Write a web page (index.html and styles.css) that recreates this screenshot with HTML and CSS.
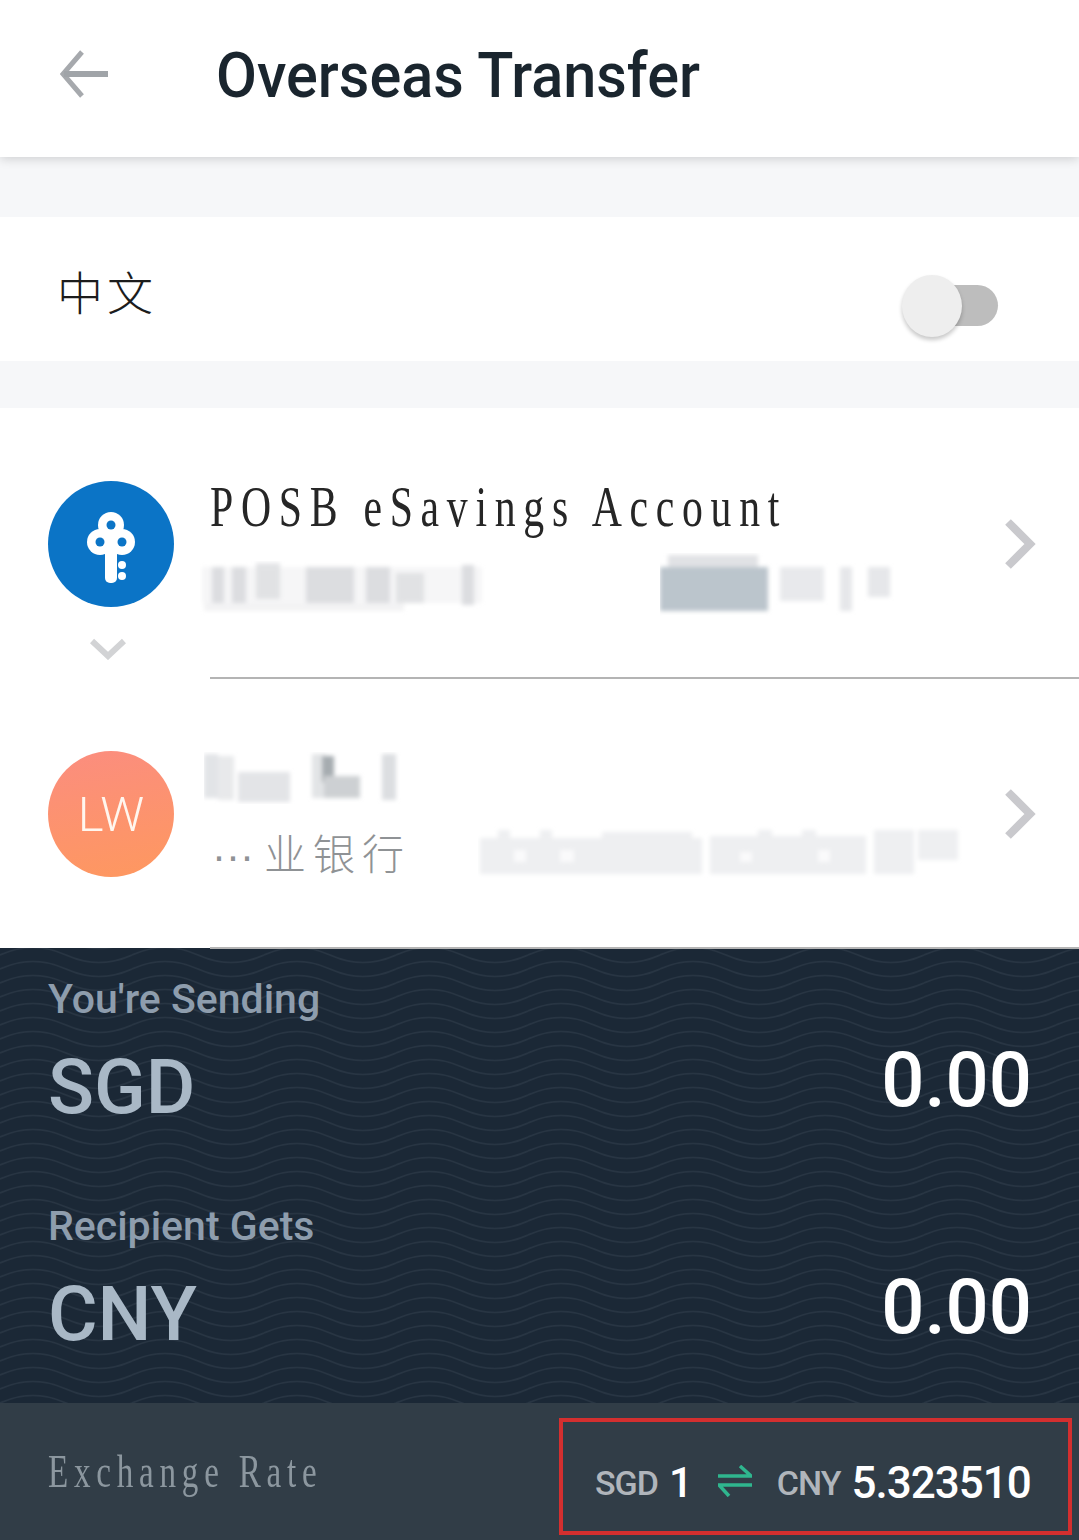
FILE: index.html
```html
<!DOCTYPE html>
<html lang="en">
<head>
  <meta charset="UTF-8" />
  <meta name="viewport" content="width=device-width, initial-scale=1.0"/>
  <title>Overseas Transfer</title>
  <link rel="stylesheet" href="styles.css">
</head>
<body>

<header class="topbar">
  <svg class="back" width="48" height="48" viewBox="0 0 48 48">
    <path d="M22 2 3 24l19 22" fill="none" stroke="#a6a9ad" stroke-width="5"/>
    <path d="M4 24h44" stroke="#a0a4a8" stroke-width="6"/>
  </svg>
  <h1 class="title">Overseas Transfer</h1>
</header>

<section class="lang-row">
  <span class="lang-label">中文</span>
  <div class="toggle"><div class="knob"></div></div>
</section>

<section class="list">
  <div class="row">
    <div class="avatar-col">
      <div class="avatar avatar-posb">
        <svg width="126" height="126" viewBox="0 0 126 126">
          <circle cx="63" cy="44" r="13" fill="#fff"/>
          <circle cx="52" cy="61" r="13" fill="#fff"/>
          <circle cx="74" cy="61" r="13" fill="#fff"/>
          <rect x="57" y="60" width="12" height="42" rx="5" fill="#fff"/>
          <circle cx="63" cy="44" r="4.5" fill="#0b74c6"/>
          <circle cx="52" cy="61" r="4.5" fill="#0b74c6"/>
          <circle cx="74" cy="61" r="4.5" fill="#0b74c6"/>
          <circle cx="74" cy="84" r="4" fill="#fff"/>
          <circle cx="74" cy="95" r="4" fill="#fff"/>
        </svg>
      </div>
      <svg class="more" width="36" height="22" viewBox="0 0 36 22">
        <path d="M2 3l16 15L34 3" fill="none" stroke="#d2d3d5" stroke-width="6"/>
      </svg>
    </div>
    <div class="row-body">
      <div class="row-title"><span class="stretch">POSB eSavings Account</span></div>
      <div class="row-meta">
        <svg width="290" height="56" viewBox="0 0 290 56">
          <g filter="url(#soft)" fill="#dcdde0">
            <rect x="2" y="6" width="280" height="36" opacity=".25"/>
            <rect x="12" y="6" width="12" height="36"/>
            <rect x="32" y="6" width="14" height="36"/>
            <rect x="56" y="2" width="24" height="36" opacity=".8"/>
            <rect x="106" y="6" width="48" height="36"/>
            <rect x="166" y="6" width="24" height="36"/>
            <rect x="196" y="12" width="28" height="30" opacity=".8"/>
            <rect x="262" y="4" width="12" height="40"/>
            <rect x="4" y="42" width="200" height="8" opacity=".35"/>
          </g>
        </svg>
        <svg class="meta-right" width="236" height="64" viewBox="0 0 236 64">
          <g filter="url(#soft)">
            <rect x="8" y="2" width="90" height="14" fill="#e1e2e5"/>
            <rect x="0" y="14" width="108" height="44" fill="#bbc5cc"/>
            <rect x="120" y="14" width="44" height="34" fill="#e8e9ec"/>
            <rect x="180" y="14" width="12" height="44" fill="#e6e7ea"/>
            <rect x="208" y="14" width="22" height="30" fill="#e6e7ea"/>
          </g>
        </svg>
      </div>
      <svg class="blur-defs" width="0" height="0">
        <filter id="soft" x="-10%" y="-30%" width="120%" height="160%"><feGaussianBlur stdDeviation="2"/></filter>
      </svg>
    </div>
    <svg class="chevron" width="32" height="50" viewBox="0 0 32 50">
      <path d="M4 3l22 22L4 47" fill="none" stroke="#c9c9cd" stroke-width="8"/>
    </svg>
  </div>

  <div class="row">
    <div class="avatar-col">
      <div class="avatar avatar-lw">LW</div>
    </div>
    <div class="row-body">
      <svg class="name-blur" width="200" height="52" viewBox="0 0 200 52">
        <g filter="url(#soft)">
          <rect x="0" y="2" width="14" height="44" fill="#e2e4e7"/>
          <rect x="14" y="4" width="16" height="44" fill="#e8e9eb"/>
          <rect x="34" y="20" width="52" height="30" fill="#e3e4e7"/>
          <rect x="108" y="2" width="14" height="44" fill="#e2e4e6"/>
          <rect x="118" y="4" width="12" height="26" fill="#a6acb0"/>
          <rect x="120" y="24" width="36" height="22" fill="#cdd0d3"/>
          <rect x="178" y="2" width="14" height="46" fill="#dcdee1"/>
        </g>
      </svg>
      <div class="bank-line">
        <span class="bank-name"><span class="bank-dots">···</span>业银行</span>
        <svg class="bank-blur" width="484" height="52" viewBox="0 0 484 52">
          <g filter="url(#soft)" fill="#eeeff1">
            <rect x="2" y="12" width="222" height="36"/>
            <rect x="232" y="10" width="156" height="38"/>
            <rect x="396" y="4" width="40" height="44"/>
            <rect x="440" y="4" width="40" height="30"/>
            <rect x="20" y="4" width="12" height="10"/>
            <rect x="62" y="4" width="12" height="10"/>
            <rect x="124" y="6" width="90" height="8"/>
            <rect x="280" y="4" width="14" height="10"/>
            <rect x="324" y="4" width="14" height="10"/>
          </g>
          <g filter="url(#soft)" fill="#fafafb">
            <rect x="36" y="24" width="12" height="12"/>
            <rect x="82" y="24" width="14" height="12"/>
            <rect x="262" y="26" width="12" height="10"/>
            <rect x="340" y="24" width="12" height="12"/>
          </g>
        </svg>
      </div>
    </div>
    <svg class="chevron" width="32" height="50" viewBox="0 0 32 50">
      <path d="M4 3l22 22L4 47" fill="none" stroke="#c9c9cd" stroke-width="8"/>
    </svg>
  </div>
</section>

<section class="panel">
  <svg class="waves" width="1079" height="455">
    <defs>
      <pattern id="wave" width="132" height="14" patternUnits="userSpaceOnUse">
        <path d="M0 7C22 -3 44 -3 66 7s44 10 66 0M0 -7C22 -17 44 -17 66 -7s44 10 66 0M0 21C22 11 44 11 66 21s44 10 66 0" fill="none" stroke="#283543" stroke-width="1.6"/>
      </pattern>
    </defs>
    <rect width="1079" height="455" fill="url(#wave)"/>
  </svg>
  <div class="amount-block">
    <div class="amount-label">You're Sending</div>
    <div class="amount-line">
      <span class="currency">SGD</span>
      <span class="amount">0.00</span>
    </div>
  </div>
  <div class="amount-block">
    <div class="amount-label">Recipient Gets</div>
    <div class="amount-line">
      <span class="currency">CNY</span>
      <span class="amount">0.00</span>
    </div>
  </div>
</section>

<section class="rate-row">
  <span class="rate-label"><span class="stretch">Exchange Rate</span></span>
  <div class="rate-box">
    <span class="rate-code">SGD</span>
    <span class="rate-one">1</span>
    <svg class="swap" width="34" height="32" viewBox="0 0 34 32">
      <path d="M0 11h33L22 1M34 20H1l10 11" fill="none" stroke="#2fb68e" stroke-width="3.5"/>
    </svg>
    <span class="rate-code">CNY</span>
    <span class="rate-value">5.323510</span>
  </div>
</section>

</body>
</html>
```
FILE: styles.css
```css
* {
  box-sizing: border-box;
}
html, body {
  margin: 0;
  padding: 0;
}
body {
  width: 1079px;
  height: 1540px;
  overflow: hidden;
  background-color: #f6f7f9;
  font-family: Roboto, "Noto Sans CJK SC", sans-serif;
}

.topbar {
  height: 157px;
  background-color: #fff;
  display: flex;
  align-items: center;
  padding: 0 0 9px 60px;
  box-shadow: 0 2px 10px rgba(0, 0, 0, 0.16);
  position: relative;
}
.back {
  margin-right: 110px;
}
.title {
  margin: 3px 0 0 -2px;
  font-size: 59.4px;
  font-weight: 500;
  color: #1a252e;
  transform: scaleY(1.06);
}

.lang-row {
  height: 144px;
  margin-top: 60px;
  background-color: #fff;
  display: flex;
  align-items: center;
  justify-content: space-between;
  padding: 0 81px 0 57px;
}
.lang-label {
  font-family: "Noto Sans CJK SC", sans-serif;
  font-weight: 300;
  font-size: 46px;
  letter-spacing: 4px;
  color: #1c1c1c;
  margin-top: 2px;
}
.toggle {
  width: 78px;
  height: 41px;
  background-color: #bdbdbd;
  border-radius: 21px;
  position: relative;
  margin-top: 32px;
}
.knob {
  position: absolute;
  left: -18px;
  top: -10px;
  width: 60px;
  height: 62px;
  border-radius: 50%;
  background-color: #eeeeee;
  box-shadow: 0 3px 4px rgba(0, 0, 0, 0.22);
}

.list {
  margin-top: 47px;
  background-color: #fff;
  position: relative;
  z-index: 1;
}
.row {
  height: 270px;
  display: flex;
  padding-left: 48px;
  position: relative;
}
.avatar-col {
  width: 162px;
  padding-top: 73px;
  flex-shrink: 0;
}
.avatar {
  width: 126px;
  height: 126px;
  border-radius: 50%;
  display: flex;
  align-items: center;
  justify-content: center;
}
.avatar-posb {
  background-color: #0b74c6;
}
.avatar-lw {
  background: linear-gradient(170deg, #fb8d7f, #fe985f);
  color: #fff6ee;
  font-size: 49px;
  font-weight: 300;
}
.more {
  display: block;
  margin: 31px 0 0 42px;
}
.row-body {
  flex: 1;
  border-bottom: 2px solid #b4b4b4;
  margin-bottom: -1px;
  padding-top: 66px;
  min-width: 0;
}
.stretch {
  display: inline-block;
  transform: scaleX(0.72);
  transform-origin: left center;
  white-space: nowrap;
}
.row-title {
  font-family: "Liberation Serif", serif;
  font-size: 58px;
  letter-spacing: 10.7px;
  line-height: 66px;
  color: #262626;
}
.row-meta {
  display: flex;
  align-items: flex-end;
  margin: 13px 0 0 -10px;
}
.row-meta svg {
  display: block;
  flex-shrink: 0;
}
.meta-right {
  margin-left: 170px;
}
.blur-defs {
  position: absolute;
}
.chevron {
  position: absolute;
  right: 43px;
  top: 111px;
}

.name-blur {
  display: block;
  margin: 8px 0 0 -6px;
}
.bank-line {
  display: flex;
  align-items: center;
  margin-top: 17px;
}
.bank-name {
  font-family: "Noto Sans CJK SC", sans-serif;
  font-weight: 300;
  font-size: 42px;
  letter-spacing: 7px;
  color: #8f9295;
  width: 268px;
  white-space: nowrap;
}
.bank-dots {
  font-family: "Liberation Sans", sans-serif;
  letter-spacing: 0;
  margin: 0 10px 0 2px;
}

.panel {
  height: 455px;
  background-color: #1b2836;
  position: relative;
  padding: 26px 48px 0;
}
.waves {
  position: absolute;
  left: 0;
  top: 0;
}
.amount-block {
  position: relative;
  height: 227px;
}
.amount-label {
  font-size: 41px;
  font-weight: 500;
  line-height: 50px;
  color: #8e9dad;
}
.amount-line {
  display: flex;
  justify-content: space-between;
  align-items: center;
  height: 90px;
  margin-top: 18px;
}
.currency {
  font-size: 76px;
  font-weight: 500;
  color: #a9b8c6;
}
.amount {
  font-size: 76px;
  font-weight: 500;
  color: #fff;
  margin: -14px -1px 0 0;
}

.rate-row {
  height: 137px;
  background-color: #313d47;
  display: flex;
  justify-content: space-between;
  align-items: center;
  padding: 0 7px 0 48px;
}
.rate-label {
  font-family: "Liberation Serif", serif;
  font-size: 46px;
  letter-spacing: 8px;
  color: #8c979f;
  margin-top: 0;
}
.rate-box {
  width: 513px;
  height: 117px;
  margin-top: 10px;
  border: 4px solid #d32f2f;
  display: flex;
  align-items: center;
  padding: 12px 0 0 32px;
  color: #fff;
}
.rate-code {
  font-size: 34px;
  font-weight: 500;
  letter-spacing: -1px;
  color: #b0b5bb;
  margin-right: 11px;
}
.rate-one {
  font-size: 42px;
  font-weight: 500;
}
.swap {
  margin: -4px 25px 0 25px;
}
.rate-value {
  font-size: 44px;
  font-weight: 500;
  letter-spacing: -1px;
}
```
